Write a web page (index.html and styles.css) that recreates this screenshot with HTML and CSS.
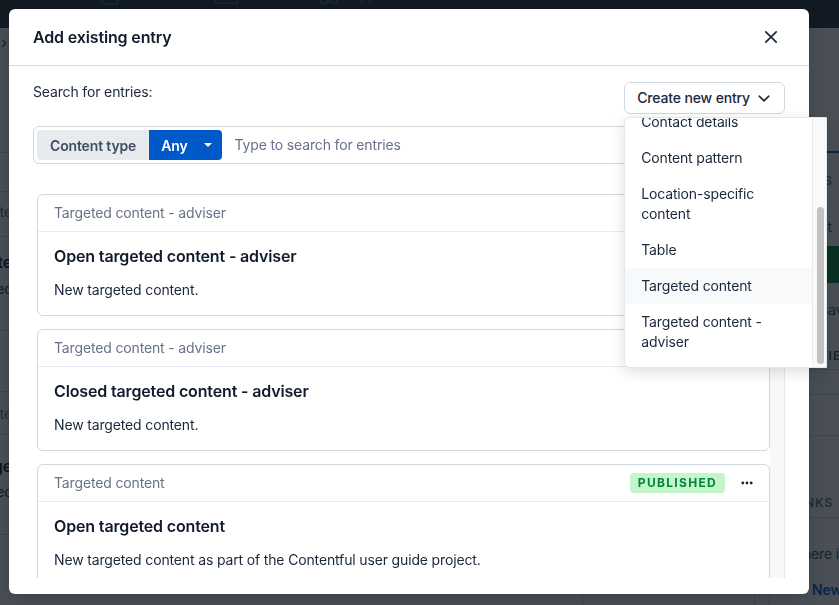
FILE: index.html
```html
<!DOCTYPE html>
<html lang="en">
<head>
<meta charset="utf-8">
<title>Add existing entry</title>
<link rel="stylesheet" href="styles.css">
</head>
<body>
<div class="app">
  <header class="app-top">
    <svg class="top-icons" width="839" height="28" viewBox="0 0 839 28">
      <path d="M102 -4v6a2 2 0 0 0 2 2h12a2 2 0 0 0 2-2v-6" fill="none" stroke="#6b7888" stroke-width="1.2"/>
      <path d="M215 -6v7a2 2 0 0 0 2 2h19a2 2 0 0 0 2-2v-7" fill="none" stroke="#6b7888" stroke-width="1.2"/>
      <path d="M321 3v-3M328 3v-3M321 3h7M331 3v-3M337 3v-3M331 3h6" fill="none" stroke="#6b7888" stroke-width="1.2"/>
      <path d="M362 3v-3M370 3v-3" fill="none" stroke="#6b7888" stroke-width="1.2"/>
    </svg>
  </header>
  <div class="app-main">
    <div class="bg-left">
      <div class="bl bl-crumb">›</div>
      <div class="bl bl-gap1"></div>
      <div class="bl bl-gap2"></div>
      <div class="bl bl-head"><span class="muted">Template</span></div>
      <div class="bl bl-card"><span class="strong">Delete</span><span>Spec</span></div>
      <div class="bl bl-gap3"></div>
      <div class="bl bl-head2"><span class="muted">Template</span></div>
      <div class="bl bl-card2"><span class="strong">Page</span><span>Spec</span></div>
    </div>
    <div class="bg-center">
      <div class="bc-a"></div>
      <div class="bc-b"></div>
      <div class="bc-c"></div>
    </div>
    <aside class="bg-side">
      <div class="bs-tabs"></div>
      <div class="bs-row bs-details">DETAILS</div>
      <div class="bs-row bs-edit">Edit</div>
      <div class="bs-publish"></div>
      <div class="bs-row bs-saved">Last saved</div>
      <div class="bs-row bs-preview">PREVIEW</div>
      <div class="bs-row bs-gap1"></div>
      <div class="bs-row bs-gap2"></div>
      <div class="bs-row bs-links">LINKS</div>
      <div class="bs-text">
        <p class="bs-para">There is no reference</p>
        <p class="bs-new">New</p>
      </div>
    </aside>
  </div>
</div>

<div class="overlay"></div>

<div class="modal-layer">
  <section class="modal" role="dialog" aria-label="Add existing entry">
    <header class="modal-head">
      <h2 class="modal-title">Add existing entry</h2>
      <button class="close-btn" type="button" aria-label="Close">
        <svg width="20" height="20" viewBox="0 0 20 20"><path d="M4.8 4.8l10.4 10.4M15.2 4.8L4.8 15.2" stroke="#1b273a" stroke-width="1.7" stroke-linecap="round"/></svg>
      </button>
    </header>

    <div class="modal-body">
      <div class="toolbar">
        <span class="search-label">Search for entries:</span>
        <div class="create-wrap">
          <button class="create-btn" type="button">
            <span>Create new entry</span>
            <svg width="16" height="16" viewBox="0 0 16 16"><path d="M3.2 6.2l4.8 4.6 4.8-4.6" fill="none" stroke="#1b273a" stroke-width="1.6" stroke-linecap="round" stroke-linejoin="round"/></svg>
          </button>
          <div class="menu">
            <ul class="menu-list">
              <li class="menu-item">Contact details</li>
              <li class="menu-item">Content pattern</li>
              <li class="menu-item">Location-specific content</li>
              <li class="menu-item">Table</li>
              <li class="menu-item is-hover">Targeted content</li>
              <li class="menu-item">Targeted content - adviser</li>
            </ul>
            <div class="menu-track"><div class="menu-thumb"></div></div>
          </div>
        </div>
      </div>

      <div class="search">
        <span class="ct-label">Content type</span>
        <span class="ct-select">Any<svg width="8" height="4" viewBox="0 0 8 4"><path d="M0 0h8L4 4z" fill="#fff"/></svg></span>
        <input class="search-input" type="text" placeholder="Type to search for entries">
      </div>

      <div class="results">
        <div class="cards">
          <article class="card">
            <div class="card-head">
              <span>Targeted content - adviser</span>
            </div>
            <div class="card-body">
              <h3 class="card-title">Open targeted content - adviser</h3>
              <p class="card-desc">New targeted content.</p>
            </div>
          </article>
          <article class="card">
            <div class="card-head">
              <span>Targeted content - adviser</span>
            </div>
            <div class="card-body">
              <h3 class="card-title">Closed targeted content - adviser</h3>
              <p class="card-desc">New targeted content.</p>
            </div>
          </article>
          <article class="card">
            <div class="card-head">
              <span>Targeted content</span>
              <span class="card-status"><span class="badge">Published</span><svg class="dots" width="12" height="4" viewBox="0 0 12 4"><circle cx="1.8" cy="2" r="1.4"/><circle cx="6" cy="2" r="1.4"/><circle cx="10.2" cy="2" r="1.4"/></svg></span>
            </div>
            <div class="card-body">
              <h3 class="card-title">Open targeted content</h3>
              <p class="card-desc">New targeted content as part of the Contentful user guide project.</p>
            </div>
          </article>
        </div>
        <div class="track"></div>
      </div>
    </div>
  </section>
</div>
</body>
</html>
```

FILE: styles.css
```css
* { box-sizing: border-box; }

html, body {
  margin: 0;
  width: 839px;
  height: 605px;
  overflow: hidden;
}

body {
  font-family: "Inter", "Noto Sans", "Liberation Sans", sans-serif;
  letter-spacing: -0.15px;
  background: #ffffff;
  color: #1b273a;
}

/* ---------- background app (dimmed by the overlay) ---------- */
.app {
  height: 605px;
  display: flex;
  flex-direction: column;
}

.app-top {
  height: 28px;
  flex: none;
  background: #25303d;
}

.top-icons { display: block; }

.app-main {
  flex: 1;
  min-height: 0;
  display: flex;
}

.bg-left {
  width: 12px;
  flex: none;
  overflow: hidden;
  display: flex;
  flex-direction: column;
  font-size: 14px;
  line-height: 20px;
  color: #1b273a;
}

.bl {
  display: flex;
  flex-direction: column;
  align-items: flex-end;
  white-space: nowrap;
  border-bottom: 1px solid #cfd9e0;
  flex: none;
}

.bl-crumb { height: 28px; line-height: 28px; border-bottom: 0; font-size: 16px; color: #414d63; align-items: flex-start; padding-left: 1px; }
.bl-gap1 { height: 97px; }
.bl-gap2 { height: 39px; }
.bl-head { height: 45px; padding-top: 10px; }
.bl-card { height: 94px; padding-top: 15px; gap: 7px; }
.bl-gap3 { height: 61px; }
.bl-head2 { height: 43px; padding-top: 12px; }
.bl-card2 { height: 100px; padding-top: 21px; gap: 6px; }

.muted { color: #67728a; }
.strong { font-weight: 600; color: #111b2b; font-size: 16px; }

.bg-center {
  flex: 1;
  display: flex;
}

.bc-a { flex: 1; border-right: 1px solid #cfd9e0; }
.bc-b { width: 172px; flex: none; border-right: 1px solid #cfd9e0; }
.bc-c { width: 14px; flex: none; }

.bg-side {
  width: 70px;
  flex: none;
  border-left: 1px solid #cfd9e0;
  display: flex;
  flex-direction: column;
  font-size: 14px;
  line-height: 20px;
  overflow: hidden;
  white-space: nowrap;
}

.bs-tabs {
  height: 125px;
  flex: none;
  border-bottom: 2px solid #0059c8;
}

.bs-row {
  flex: none;
  padding-left: 23px;
  color: #414d63;
}

.bs-details {
  height: 51px;
  padding-top: 18px;
  text-align: right;
  padding-right: 6px;
  padding-left: 0;
  font-size: 12px;
  letter-spacing: 1px;
  color: #67728a;
  font-weight: 600;
}

.bs-edit {
  height: 42px;
  padding-top: 13px;
  text-align: right;
  padding-left: 0;
  padding-right: 7px;
}

.bs-publish {
  height: 37px;
  flex: none;
  margin-left: 12px;
  background: #008539;
}

.bs-saved { height: 50px; padding-top: 17px; padding-left: 20px; }

.bs-preview {
  height: 37px;
  padding-top: 13px;
  border-bottom: 1px solid #cfd9e0;
  font-size: 12px;
  letter-spacing: 1px;
  font-weight: 600;
}

.bs-gap1 { height: 25px; border-bottom: 1px solid #cfd9e0; }
.bs-gap2 { height: 41px; border-bottom: 1px solid #cfd9e0; }

.bs-links {
  height: 82px;
  padding-top: 57px;
  border-bottom: 1px solid #cfd9e0;
  font-size: 12px;
  letter-spacing: 1px;
  font-weight: 600;
  color: #67728a;
}

.bs-text { padding: 26px 0 0 24px; }
.bs-para { margin: 0; color: #414d63; }
.bs-new { margin: 16px 0 0 18px; color: #0059c8; font-weight: 600; }

/* ---------- overlay ---------- */
.overlay {
  position: fixed;
  inset: 0;
  background: rgba(12, 20, 28, 0.75);
}

.modal-layer {
  position: fixed;
  inset: 0;
  padding: 9px 0 0 9px;
}

/* ---------- modal ---------- */
.modal {
  width: 800px;
  height: 585px;
  background: #ffffff;
  border-radius: 6px;
  display: flex;
  flex-direction: column;
  box-shadow: 0 6px 18px rgba(0, 0, 0, 0.15);
}

.modal-head {
  height: 57px;
  flex: none;
  display: flex;
  align-items: center;
  justify-content: space-between;
  padding: 0 22px 0 24px;
  border-bottom: 1px solid #d3dce0;
}

.modal-title {
  margin: 0;
  font-size: 16px;
  line-height: 24px;
  font-weight: 600;
  color: #111b2b;
}

.close-btn {
  width: 32px;
  height: 32px;
  padding: 0;
  border: 0;
  background: transparent;
  display: flex;
  align-items: center;
  justify-content: center;
}

.modal-body {
  flex: 1;
  min-height: 0;
  display: flex;
  flex-direction: column;
  padding: 16px 24px 16px 24px;
}

.toolbar {
  height: 32px;
  flex: none;
  display: flex;
  justify-content: space-between;
  align-items: flex-start;
}

.search-label {
  font-size: 14px;
  line-height: 20px;
  color: #1b273a;
}

.create-wrap {
  position: relative;
}

.create-btn {
  height: 32px;
  display: flex;
  align-items: center;
  gap: 6px;
  padding: 0 12px 0 12px;
  border: 1px solid #cfd9e0;
  border-radius: 6px;
  background: #ffffff;
  font-family: inherit;
  letter-spacing: inherit;
  font-size: 14px;
  line-height: 20px;
  font-weight: 500;
  color: #1b273a;
}

.menu {
  position: absolute;
  top: calc(100% + 3px);
  left: 0;
  width: 203px;
  height: 251px;
  z-index: 5;
  display: flex;
  background: #ffffff;
  border: 1px solid #e3e8ec;
  border-radius: 6px 0 0 6px;
  box-shadow: 0 4px 14px rgba(17, 27, 43, 0.14);
  overflow: hidden;
}

.menu-list {
  flex: 1;
  min-width: 0;
  margin: 0;
  padding: 0 0 7px;
  list-style: none;
  display: flex;
  flex-direction: column;
  justify-content: flex-end;
  overflow: hidden;
}

.menu-item {
  flex: none;
  padding: 8px 16px;
  font-size: 14px;
  line-height: 20px;
  color: #1b273a;
}

.menu-item.is-hover { background: #f7f9fa; }

.menu-track {
  width: 14px;
  flex: none;
  background: #f9f9f9;
  border-left: 1px solid #ececec;
  padding-left: 4px;
}

.menu-thumb {
  width: 7px;
  height: 157px;
  margin-top: 89px;
  border-radius: 4px;
  background: #c1c1c1;
}

.search {
  margin-top: 12px;
  height: 38px;
  flex: none;
  display: flex;
  align-items: center;
  padding: 3px;
  border: 1px solid #cfd9e0;
  border-radius: 6px;
}

.ct-label {
  height: 30px;
  display: flex;
  align-items: center;
  padding: 0 13px;
  background: #e7ebee;
  border-radius: 4px 0 0 4px;
  font-size: 14px;
  font-weight: 600;
  color: #414d63;
}

.ct-select {
  height: 30px;
  display: flex;
  align-items: center;
  gap: 16px;
  padding: 0 10px 0 12px;
  background: #0059c8;
  border-radius: 0 4px 4px 0;
  font-size: 14px;
  font-weight: 600;
  color: #ffffff;
}

.search-input {
  flex: 1;
  min-width: 0;
  margin-left: 13px;
  border: 0;
  padding: 0;
  outline: none;
  background: transparent;
  font-family: inherit;
  letter-spacing: inherit;
  font-size: 14px;
  line-height: 20px;
  color: #1b273a;
}

.search-input::placeholder { color: #67728a; opacity: 1; }

.results {
  flex: 1;
  min-height: 0;
  margin-top: 16px;
  display: flex;
}

.cards {
  flex: 1;
  min-width: 0;
  overflow: hidden;
  padding: 14px 0 0 4px;
  display: flex;
  flex-direction: column;
  gap: 13px;
}

.track {
  width: 15px;
  flex: none;
  background: #f8f8f8;
  border-right: 1px solid #e6e6e6;
}

.card {
  flex: none;
  border: 1px solid #cfd9e0;
  border-radius: 6px;
}

.card-head {
  height: 37px;
  display: flex;
  align-items: center;
  justify-content: space-between;
  padding: 0 16px;
  border-bottom: 1px solid #e7ebee;
  font-size: 14px;
  line-height: 20px;
  color: #67728a;
}

.card-status {
  display: flex;
  align-items: center;
  gap: 16px;
}

.badge {
  height: 20px;
  display: flex;
  align-items: center;
  padding: 0 8px;
  border-radius: 4px;
  background: #c5f5cb;
  color: #00853b;
  font-size: 12px;
  font-weight: 700;
  letter-spacing: 1.3px;
  text-transform: uppercase;
}

.dots { fill: #1b273a; display: block; }

.card-body {
  padding: 12px 16px 15px;
}

.card-title {
  margin: 0 0 12px;
  font-size: 16px;
  line-height: 24px;
  font-weight: 600;
  color: #111b2b;
}

.card-desc {
  margin: 0;
  font-size: 14px;
  line-height: 20px;
  color: #1b273a;
}
```
